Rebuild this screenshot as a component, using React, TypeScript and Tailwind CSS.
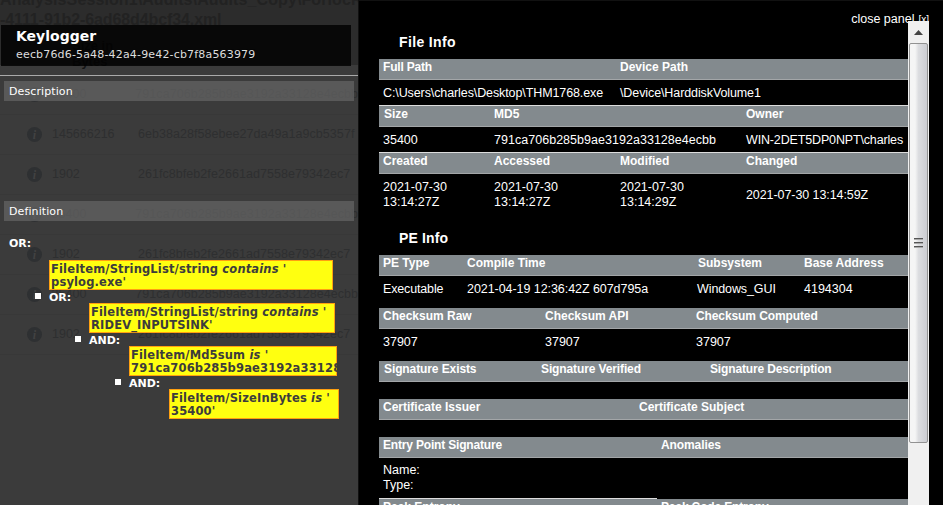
import React from "react";

type Cell = { text: string; w: string };

const ghostRows = [
  ["35400", "791ca706b285b9ae3192a33128e4ecbb"],
  ["145666216", "6eb38a28f58ebee27da49a1a9cb5357f"],
  ["1902", "261fc8bfeb2fe2661ad7558e79342ec7"],
  ["35400", "791ca706b285b9ae3192a33128e4ecbb"],
  ["1902", "261fc8bfeb2fe2661ad7558e79342ec7"],
  ["35400", "791ca706b285b9ae3192a33128e4ecbb"],
  ["1902", "261fc8bfeb2fe2661ad7558e79342ec7"],
];

function Backdrop() {
  return (
    <div className="absolute inset-0 overflow-hidden font-['Liberation_Sans',Arial,sans-serif]">
      <div className="h-[75px] bg-[#2c2c2c] text-[16px] font-bold leading-5 text-[#222]">
        <div className="-mt-[10px] h-5 whitespace-nowrap tracking-[0.1px]">AnalysisSession1\Audits\Audits_Copy\ForIocReport</div>
        <div className="h-5 whitespace-nowrap tracking-[-0.1px]">-4111-91b2-6ad68d4bcf34.xml</div>
        <div className="flex items-center pl-[72px] pt-[8px] text-[13px] leading-4 text-[#151515]">
          <div className="w-[158px]">Size in<br />Bytes</div>
          <div>Md5</div>
        </div>
      </div>
      <div className="h-[10px]" />
      {ghostRows.map(([size, md5], i) => (
        <div key={i} className="flex h-10 items-center border-b border-[#383838] text-[12.5px] text-[#2e2f30] pl-[27px]">
          <span className="flex size-[15px] items-center justify-center rounded-full bg-[#2e3032] font-['Liberation_Serif',serif] text-[12px] font-bold italic text-[#424242]">i</span>
          <span className="w-[96px] pl-[10px]">{size}</span>
          <span className="whitespace-nowrap tracking-[0.05px]">{md5}</span>
        </div>
      ))}
    </div>
  );
}

function Rule({ path, op, value, w }: { path: string; op: string; value: string; w: string }) {
  return (
    <div className={`${w} h-[30px] whitespace-nowrap border border-[#ffa010] bg-[#ffff10] pl-px pt-[2px] text-[11.5px] leading-[13px] tracking-[0.15px] text-[#3c3c3c]`}>
      {path} <i>{op}</i> '<br />{value}'
    </div>
  );
}

function Branch({ label, children }: { label: string; children: React.ReactNode }) {
  return (
    <div>
      <div className="relative h-[13px] leading-[15px] text-white">
        <span className="absolute -left-[14px] top-[3px] size-[6px] bg-white" />
        {label}
      </div>
      <div className="pl-10">{children}</div>
    </div>
  );
}

function LeftPanel() {
  return (
    <section className="relative h-full w-[358px] shrink-0 bg-[#3b3b3b] font-['DejaVu_Sans',Verdana,sans-serif] text-[11px] text-white">
      <Backdrop />
      <div className="relative">
        <header className="h-[76px] border-b border-[#aaa] pl-px pt-[25px]">
          <div className="h-[41px] w-[350px] bg-black/80 pl-[15px] pt-[2px]">
            <h1 className="text-[14px] font-bold leading-[18px]">Keylogger</h1>
            <p className="text-[11px] leading-[19px] tracking-[0.17px] text-[#ddd]">eecb76d6-5a48-42a4-9e42-cb7f8a563979</p>
          </div>
        </header>
        <h2 className="ml-1 mt-[5px] h-5 w-[350px] bg-[#666]/70 pl-[5px] leading-[22px] tracking-[0.1px]">Description</h2>
        <h2 className="ml-1 mt-[100px] h-5 w-[350px] bg-[#666]/70 pl-[5px] leading-[22px] tracking-[0.1px]">Definition</h2>
        <div className="pl-[9px] pt-[15px] font-bold">
          <div className="h-6 leading-[15px]">OR:</div>
          <div className="pl-10">
            <Rule w="w-[284px]" path="FileItem/StringList/string" op="contains" value="psylog.exe" />
            <Branch label="OR:">
              <Rule w="w-[246px]" path="FileItem/StringList/string" op="contains" value="RIDEV_INPUTSINK" />
              <Branch label="AND:">
                <div className="w-[208px] overflow-hidden">
                  <Rule w="w-[208px]" path="FileItem/Md5sum" op="is" value="791ca706b285b9ae3192a33128" />
                </div>
                <Branch label="AND:">
                  <Rule w="w-[170px]" path="FileItem/SizeInBytes" op="is" value="35400" />
                </Branch>
              </Branch>
            </Branch>
          </div>
        </div>
      </div>
    </section>
  );
}

function Head({ cells }: { cells: Cell[] }) {
  return (
    <div className="flex h-[21px] shrink-0 border-b border-[#a3a6a8] bg-[#838a8e] pl-1 text-[12px] font-bold leading-[16px]">
      {cells.map((c) => <div key={c.text} className={`${c.w} shrink-0 whitespace-nowrap`}>{c.text}</div>)}
    </div>
  );
}

function Values({ cells, h }: { cells: Cell[]; h: string }) {
  return (
    <div className={`${h} flex shrink-0 items-center pl-1 text-[12.5px] leading-[15px]`}>
      {cells.map((c, i) => <div key={i} className={`${c.w} shrink-0 whitespace-pre`}>{c.text}</div>)}
    </div>
  );
}

function Details() {
  return (
    <div className="flex w-[529px] flex-col overflow-hidden">
      <h2 className="h-[38px] shrink-0 pl-5 pt-[12px] text-[14px] font-bold leading-[18px] tracking-[0.35px]">File Info</h2>
      <Head cells={[{ text: "Full Path", w: "w-[237px] tracking-[-0.2px]" }, { text: "Device Path", w: "w-[200px]" }]} />
      <Values h="h-[25px] pt-[2px]" cells={[{ text: "C:\\Users\\charles\\Desktop\\THM1768.exe", w: "w-[237px] tracking-[-0.1px]" }, { text: "\\Device\\HarddiskVolume1", w: "w-[200px] tracking-[-0.1px]" }]} />
      <div className="h-px shrink-0 bg-[#ddd]" />
      <Head cells={[{ text: "Size", w: "w-[111px] pl-px" }, { text: "MD5", w: "w-[252px]" }, { text: "Owner", w: "w-[150px]" }]} />
      <Values h="h-[25px] pt-[2px]" cells={[{ text: "35400", w: "w-[111px]" }, { text: "791ca706b285b9ae3192a33128e4ecbb", w: "w-[252px] tracking-[0.03px]" }, { text: "WIN-2DET5DP0NPT\\charles", w: "w-[160px] tracking-[-0.15px]" }]} />
      <div className="h-px shrink-0 bg-[#ddd]" />
      <Head cells={[{ text: "Created", w: "w-[111px]" }, { text: "Accessed", w: "w-[126px]" }, { text: "Modified", w: "w-[126px]" }, { text: "Changed", w: "w-[150px]" }]} />
      <Values h="h-[42px]" cells={[{ text: "2021-07-30\n13:14:27Z", w: "w-[111px]" }, { text: "2021-07-30\n13:14:27Z", w: "w-[126px]" }, { text: "2021-07-30\n13:14:29Z", w: "w-[126px]" }, { text: "2021-07-30 13:14:59Z", w: "w-[150px] tracking-[-0.08px]" }]} />
      <h2 className="h-[39px] shrink-0 pl-5 pt-[13px] text-[14px] font-bold leading-[18px] tracking-[0.15px]">PE Info</h2>
      <Head cells={[{ text: "PE Type", w: "w-[84px]" }, { text: "Compile Time", w: "w-[231px]" }, { text: "Subsystem", w: "w-[106px]" }, { text: "Base Address", w: "w-[90px]" }]} />
      <Values h="h-[26px] mb-[6px]" cells={[{ text: "Executable", w: "w-[84px] tracking-[-0.15px]" }, { text: "2021-04-19 12:36:42Z 607d795a", w: "w-[230px] tracking-[-0.06px]" }, { text: "Windows_GUI", w: "w-[107px] tracking-[-0.1px]" }, { text: "4194304", w: "w-[90px]" }]} />
      <Head cells={[{ text: "Checksum Raw", w: "w-[162px]" }, { text: "Checksum API", w: "w-[151px]" }, { text: "Checksum Computed", w: "w-[150px] tracking-[-0.1px]" }]} />
      <Values h="h-[26px] mb-[6px]" cells={[{ text: "37907", w: "w-[162px]" }, { text: "37907", w: "w-[151px]" }, { text: "37907", w: "w-[150px]" }]} />
      <Head cells={[{ text: "Signature Exists", w: "w-[158px] pl-px tracking-[-0.1px]" }, { text: "Signature Verified", w: "w-[169px] tracking-[-0.12px]" }, { text: "Signature Description", w: "w-[150px] tracking-[-0.15px]" }]} />
      <div className="h-[17px] shrink-0" />
      <Head cells={[{ text: "Certificate Issuer", w: "w-[256px]" }, { text: "Certificate Subject", w: "w-[150px]" }]} />
      <div className="h-[17px] shrink-0" />
      <Head cells={[{ text: "Entry Point Signature", w: "w-[278px] tracking-[-0.18px]" }, { text: "Anomalies", w: "w-[150px] tracking-[-0.1px]" }]} />
      <Values h="h-[40px]" cells={[{ text: "Name:\nType:", w: "w-[278px]" }]} />
      <div className="h-px w-[278px] shrink-0 bg-[#ddd]" />
      <Head cells={[{ text: "Peak Entropy", w: "w-[278px]" }, { text: "Peak Code Entropy", w: "w-[150px] tracking-[-0.15px]" }]} />
    </div>
  );
}

function Scrollbar() {
  return (
    <div className="relative z-10 flex w-[21px] shrink-0 flex-col bg-[#f0f0f0]">
      <div className="flex h-[22px] items-center justify-center">
        <svg width="9" height="5" viewBox="0 0 9 5"><path d="M4.5 0 9 5H0Z" fill="#444" /></svg>
      </div>
      <div className="mx-px flex h-[400px] flex-col items-center justify-center gap-[2px] rounded-[2px] border border-[#929292] bg-linear-to-r from-[#f5f5f5] from-30% via-[#dcdde0] via-50% to-[#cccdd2]">
        <i className="h-[2px] w-[9px] border-b border-[#aaa] bg-[#555]" />
        <i className="h-[2px] w-[9px] border-b border-[#aaa] bg-[#555]" />
        <i className="h-[2px] w-[9px] border-b border-[#aaa] bg-[#555]" />
      </div>
    </div>
  );
}

export default function App() {
  return (
    <main className="flex h-[505px] w-[943px] overflow-hidden bg-black">
      <LeftPanel />
      <section className="flex flex-1 flex-col border-l border-t border-[#111] bg-black font-['Liberation_Sans',Arial,sans-serif] text-white">
        <div className="flex h-5 shrink-0 items-baseline justify-end pr-[14px] pt-[10px] text-[12.5px] leading-[17px]">
          close panel <span className="ml-1 text-[10px]">[x]</span>
        </div>
        <div className="flex min-h-0 flex-1 pl-5">
          <Details />
          <Scrollbar />
        </div>
      </section>
    </main>
  );
}
